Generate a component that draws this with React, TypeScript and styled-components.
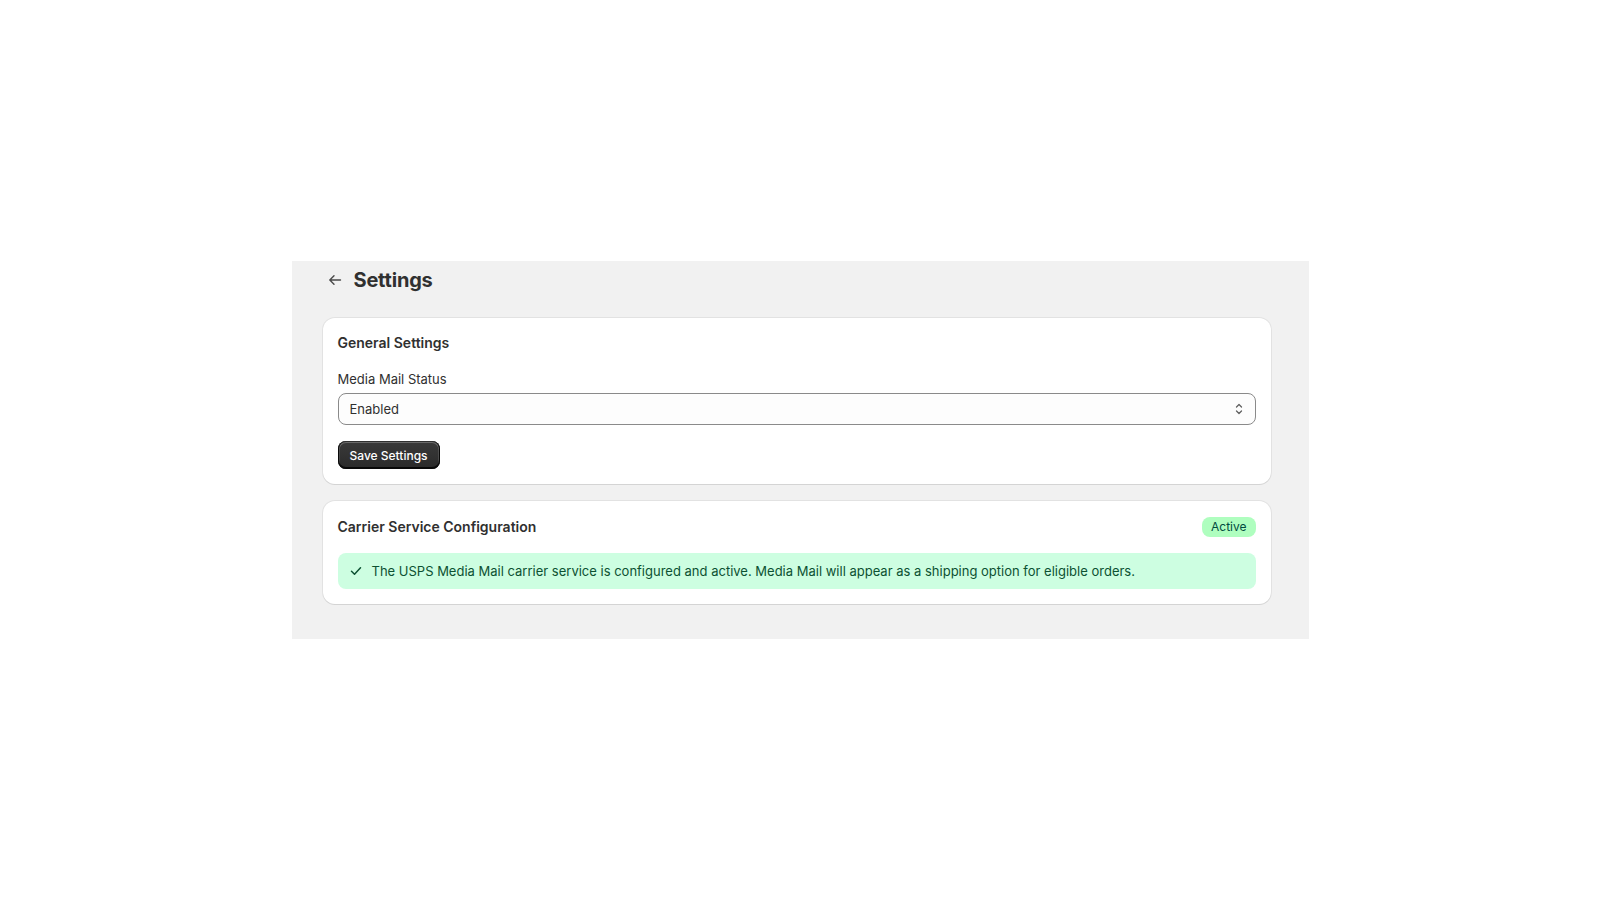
import React from 'react'
import styled, { createGlobalStyle } from 'styled-components'

const GlobalStyle = createGlobalStyle`
    html, body {
        margin: 0;
        padding: 0;
        background: #ffffff;
    }
    body {
        font-family: Inter, "Noto Sans", "Liberation Sans", sans-serif;
        color: #303030;
        -webkit-font-smoothing: antialiased;
    }
`

const Page = styled.div`
    min-height: 100vh;
    display: flex;
    align-items: center;
    justify-content: center;
`

const Frame = styled.div`
    width: 1017px;
    background: #f1f1f1;
    padding: 7px 38px 35px 31px;
    box-sizing: border-box;
    display: flex;
    flex-direction: column;
    gap: 26px;
`

const Header = styled.div`
    display: flex;
    align-items: center;
    gap: 7px;
    height: 24px;
`

const BackButton = styled.button`
    width: 24px;
    height: 24px;
    padding: 0;
    border: none;
    background: transparent;
    display: flex;
    align-items: center;
    justify-content: center;
    cursor: pointer;
    color: #4a4a4a;
`

const Title = styled.h1`
    margin: 0;
    font-size: 20px;
    line-height: 24px;
    font-weight: 700;
    color: #303030;
    letter-spacing: -0.2px;
`

const Stack = styled.div`
    display: flex;
    flex-direction: column;
    gap: 17px;
`

const Card = styled.div`
    background: #ffffff;
    border-radius: 12px;
    padding: 15px;
    box-shadow: 0 1px 0 rgba(26, 26, 26, 0.07), 0 0 0 1px rgba(0, 0, 0, 0.06);
    display: flex;
    flex-direction: column;
`

const CardTitle = styled.h2`
    margin: 0;
    font-size: 14px;
    line-height: 20px;
    font-weight: 600;
    color: #303030;
`

const Label = styled.label`
    display: block;
    margin-top: 16px;
    font-size: 13px;
    line-height: 20px;
    color: #303030;
`

const SelectBox = styled.div`
    margin-top: 4px;
    height: 32px;
    box-sizing: border-box;
    border: 1px solid #8a8a8a;
    border-radius: 8px;
    background: #fdfdfd;
    display: flex;
    align-items: center;
    justify-content: space-between;
    padding: 0 8px 0 11px;
    font-size: 13px;
    color: #303030;
`

const SaveButton = styled.button`
    margin-top: 16px;
    align-self: flex-start;
    height: 28px;
    padding: 0 12px;
    border-radius: 8px;
    border: none;
    font-family: inherit;
    font-size: 12px;
    font-weight: 500;
    color: #ffffff;
    background: linear-gradient(180deg, #3a3a3a 0%, #2a2a2a 100%);
    box-shadow: 0 -1px 0 1px rgba(0, 0, 0, 0.8) inset, 0 0 0 1px #303030 inset,
        0 0.5px 0 1.5px rgba(255, 255, 255, 0.25) inset;
    cursor: pointer;
`

const TitleRow = styled.div`
    display: flex;
    align-items: center;
    justify-content: space-between;
    height: 21px;
`

const Badge = styled.span`
    background: #affebf;
    color: #014b40;
    font-size: 12px;
    line-height: 20px;
    font-weight: 400;
    padding: 0 9px;
    border-radius: 8px;
`

const Banner = styled.div`
    margin-top: 16px;
    background: #cdfee1;
    border-radius: 8px;
    height: 36px;
    display: flex;
    align-items: center;
    gap: 8px;
    padding: 0 10px;
    font-size: 13px;
    color: #0c5132;
`

const IconWrap = styled.span`
    display: flex;
    width: 16px;
    height: 16px;
    align-items: center;
    justify-content: center;
    color: ${p => p.color || 'currentColor'};
`

const ArrowLeft = () => (
    <svg width="16" height="16" viewBox="0 0 16 16" fill="none">
        <path d="M13.5 8H3M7 3.8 2.8 8 7 12.2" stroke="currentColor" strokeWidth="1.4" strokeLinecap="round" strokeLinejoin="round"/>
    </svg>
)

const UpDown = () => (
    <svg width="16" height="16" viewBox="0 0 16 16" fill="none">
        <path d="M5.5 6 8 3.5 10.5 6M5.5 10 8 12.5 10.5 10" stroke="#616161" strokeWidth="1.3" strokeLinecap="round" strokeLinejoin="round"/>
    </svg>
)

const Check = () => (
    <svg width="16" height="16" viewBox="0 0 16 16" fill="none">
        <path d="M3.5 8.3 6.5 11.2 12.5 4.8" stroke="currentColor" strokeWidth="1.5" strokeLinecap="round" strokeLinejoin="round"/>
    </svg>
)

const App = () => {
    return (
        <Page>
            <GlobalStyle />
            <Frame>
                <Header>
                    <BackButton aria-label="Back"><ArrowLeft /></BackButton>
                    <Title>Settings</Title>
                </Header>
                <Stack>
                    <Card>
                        <CardTitle>General Settings</CardTitle>
                        <Label>Media Mail Status</Label>
                        <SelectBox>
                            <span>Enabled</span>
                            <IconWrap><UpDown /></IconWrap>
                        </SelectBox>
                        <SaveButton>Save Settings</SaveButton>
                    </Card>
                    <Card>
                        <TitleRow>
                            <CardTitle>Carrier Service Configuration</CardTitle>
                            <Badge>Active</Badge>
                        </TitleRow>
                        <Banner>
                            <IconWrap color="#0c5132"><Check /></IconWrap>
                            The USPS Media Mail carrier service is configured and active. Media Mail will appear as a shipping option for eligible orders.
                        </Banner>
                    </Card>
                </Stack>
            </Frame>
        </Page>
    )
}

export default App
